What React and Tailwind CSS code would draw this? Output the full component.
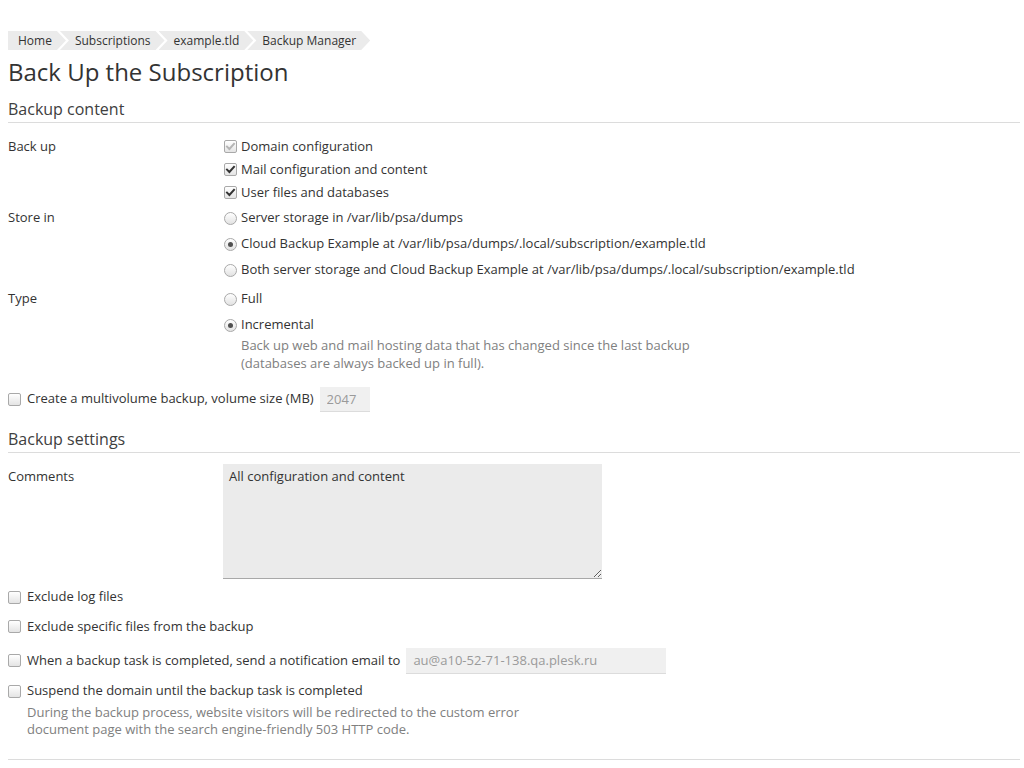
import React from "react";

const font = { fontFamily: '"Open Sans", "Liberation Sans", sans-serif' };

function Check({ checked, disabled }) {
  return (
    <span className="relative inline-block w-[13px] h-[13px] shrink-0 rounded-[2px] border border-[#a9a9a9] bg-gradient-to-b from-white to-[#e4e4e4]">
      {checked && (
        <svg viewBox="0 0 13 13" className="absolute -left-px -top-px w-[13px] h-[13px]">
          <path d="M3 6.6 L5.4 9 L10 3.8" fill="none" stroke={disabled ? "#b5b5b5" : "#333"} strokeWidth="2" strokeLinecap="square" strokeLinejoin="miter" />
        </svg>
      )}
    </span>
  );
}

function Radio({ checked }) {
  return (
    <span className="relative inline-flex items-center justify-center w-[13px] h-[13px] shrink-0 rounded-full border border-[#a9a9a9] bg-gradient-to-b from-white to-[#e2e2e2]">
      {checked && <span className="block w-[5px] h-[5px] rounded-full bg-[#505050]" />}
    </span>
  );
}

function Crumb({ children, first }) {
  return (
    <span
      className={
        "flex items-center h-[19px] bg-[#ebebeb] text-[#333] " +
        (first
          ? "pl-[10px] pr-[14px] [clip-path:polygon(0_0,calc(100%-9px)_0,100%_50%,calc(100%-9px)_100%,0_100%)]"
          : "-ml-[6px] pl-[15px] pr-[14px] [clip-path:polygon(0_0,calc(100%-9px)_0,100%_50%,calc(100%-9px)_100%,0_100%,9px_50%)]")
      }
    >
      {children}
    </span>
  );
}

function SectionHead({ children }) {
  return (
    <div className="border-b border-[#dcdcdc] pb-[2px] text-[16px] leading-[22px] text-[#404040]">
      {children}
    </div>
  );
}

export default function App() {
  return (
    <div style={font} className="bg-white min-h-[768px] pl-2 pr-1 pt-[31px] text-[13px] text-[#333]">
      {/* breadcrumbs */}
      <div className="flex text-[12px]">
        <Crumb first>Home</Crumb>
        <Crumb>Subscriptions</Crumb>
        <Crumb>example.tld</Crumb>
        <Crumb>Backup Manager</Crumb>
      </div>

      <h1 className="mt-[6px] text-[24px] leading-[32px] font-normal text-[#333]">Back Up the Subscription</h1>

      <div className="mt-[10px]">
        <SectionHead>Backup content</SectionHead>
      </div>

      <div className="mt-[12px] grid grid-cols-[216px_1fr]">
        <div className="h-[23px] flex items-center">Back up</div>
        <div className="flex flex-col">
          <label className="h-[23px] flex items-center gap-[4px]"><Check checked disabled /> Domain configuration</label>
          <label className="h-[23px] flex items-center gap-[4px]"><Check checked /> Mail configuration and content</label>
          <label className="h-[23px] flex items-center gap-[4px]"><Check checked /> User files and databases</label>
        </div>

        <div className="mt-[1px] h-[26px] flex items-center">Store in</div>
        <div className="mt-[1px] flex flex-col">
          <label className="h-[26px] flex items-center gap-[4px]"><Radio /> Server storage in /var/lib/psa/dumps</label>
          <label className="h-[26px] flex items-center gap-[4px]"><Radio checked /> Cloud Backup Example at /var/lib/psa/dumps/.local/subscription/example.tld</label>
          <label className="h-[26px] flex items-center gap-[4px]"><Radio /> Both server storage and Cloud Backup Example at /var/lib/psa/dumps/.local/subscription/example.tld</label>
        </div>

        <div className="mt-[3px] h-[26px] flex items-center">Type</div>
        <div className="mt-[3px] flex flex-col">
          <label className="h-[26px] flex items-center gap-[4px]"><Radio /> Full</label>
          <label className="h-[26px] flex items-center gap-[4px]"><Radio checked /> Incremental</label>
          <div className="-mt-[2px] pl-[17px] leading-[18px] text-[#808080]">
            Back up web and mail hosting data that has changed since the last backup
            <br />
            (databases are always backed up in full).
          </div>
        </div>
      </div>

      <div className="mt-[14px] h-[26px] flex items-center">
        <label className="flex items-center gap-[6px]"><Check /> Create a multivolume backup, volume size (MB)</label>
        <input
          readOnly
          defaultValue="2047"
          style={font}
          className="ml-[6px] w-[50px] h-[25px] px-[7px] bg-[#f0f0f0] border-b border-[#dcdcdc] text-[13px] text-[#9a9a9a] outline-none"
        />
      </div>

      <div className="mt-[16px]">
        <SectionHead>Backup settings</SectionHead>
      </div>

      <div className="mt-[11px] grid grid-cols-[215px_1fr]">
        <div className="pt-[3px] leading-[18px]">Comments</div>
        <div>
          <textarea
            readOnly
            defaultValue="All configuration and content"
            style={font}
            className="block w-[379px] h-[115px] px-[6px] pt-[3px] bg-[#ebebeb] border-b border-[#a8a8a8] text-[13px] leading-[18px] text-[#333] outline-none"
          />
        </div>
      </div>

      <div className="mt-[3px] flex flex-col">
        <label className="h-[30px] flex items-center gap-[6px]"><Check /> Exclude log files</label>
        <label className="h-[29px] flex items-center gap-[6px]"><Check /> Exclude specific files from the backup</label>
        <div className="h-[39px] flex items-center">
          <label className="flex items-center gap-[6px]"><Check /> When a backup task is completed, send a notification email to</label>
          <input
            readOnly
            defaultValue="au@a10-52-71-138.qa.plesk.ru"
            style={font}
            className="ml-[6px] w-[260px] h-[26px] px-[7px] bg-[#f0f0f0] border-b border-[#dcdcdc] text-[13px] text-[#9a9a9a] outline-none"
          />
        </div>
        <label className="h-[22px] flex items-center gap-[6px]"><Check /> Suspend the domain until the backup task is completed</label>
        <div className="pl-[19px] pt-[2px] leading-[17px] text-[#808080]">
          During the backup process, website visitors will be redirected to the custom error
          <br />
          document page with the search engine-friendly 503 HTTP code.
        </div>
      </div>

      <div className="mt-[21px] border-b border-[#dcdcdc]" />
    </div>
  );
}
